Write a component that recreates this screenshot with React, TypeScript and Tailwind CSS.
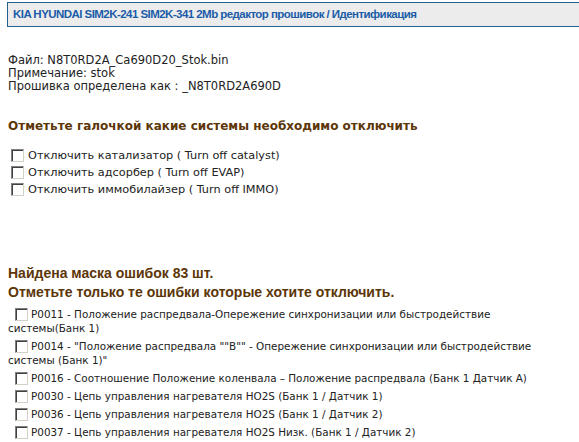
import React from "react";

const Box = ({ inline }: { inline?: boolean }) => (
  <span
    className={
      "inline-block w-[13px] h-[13px] shrink-0 border border-t-[#808080] border-l-[#808080] border-r-[#d4d0c8] border-b-[#d4d0c8] bg-white shadow-[inset_1px_1px_0_#404040] " +
      (inline ? "align-[-3px]" : "align-middle")
    }
  />
);

const systems = [
  "Отключить катализатор ( Turn off catalyst)",
  "Отключить адсорбер ( Turn off EVAP)",
  "Отключить иммобилайзер ( Turn off IMMO)",
];

const errors = [
  "P0011 - Положение распредвала-Опережение синхронизации или быстродействие системы(Банк 1)",
  'P0014 - "Положение распредвала ""B"" - Опережение синхронизации или быстродействие системы (Банк 1)"',
  "P0016 - Соотношение Положение коленвала – Положение распредвала (Банк 1 Датчик А)",
  "P0030 - Цепь управления нагревателя HO2S (Банк 1 / Датчик 1)",
  "P0036 - Цепь управления нагревателя HO2S (Банк 1 / Датчик 2)",
  "P0037 - Цепь управления нагревателя HO2S Низк. (Банк 1 / Датчик 2)",
];

export default function App() {
  return (
    <div className="w-[579px] h-[442px] overflow-hidden bg-white text-[#222] font-['DejaVu_Sans',Verdana,sans-serif] text-[11px]">
      <div className="mt-[2px] ml-[7px] h-[25px] border-l border-y border-[#25618f] bg-[#ececec] flex items-center pl-[5px]">
        <span className="font-['Liberation_Sans',Arial,sans-serif] font-bold text-[11.5px] text-[#1b5ca8] tracking-[-0.55px]">
          KIA HYUNDAI SIM2K-241 SIM2K-341 2Mb редактор прошивок / Идентификация
        </span>
      </div>

      <div className="mt-[27px] ml-[8px] leading-[13px] text-[11.5px]">
        <div>Файл: N8T0RD2A_Ca690D20_Stok.bin</div>
        <div>Примечание: stok</div>
        <div>Прошивка определена как : _N8T0RD2A690D</div>
      </div>

      <div className="mt-[25px] ml-[8px] font-bold text-[12px] text-[#5c3608] leading-[16px]">
        Отметьте галочкой какие системы необходимо отключить
      </div>

      <div className="mt-[15px] ml-[11px] flex flex-col gap-[4px] text-[11.3px]">
        {systems.map((s) => (
          <div key={s} className="flex items-center gap-[4px] h-[13px]">
            <Box />
            <span className="leading-[13px]">{s}</span>
          </div>
        ))}
      </div>

      <div className="mt-[68px] ml-[8px] font-['Liberation_Sans',Arial,sans-serif] font-bold text-[14px] text-[#5c3608] leading-[19px]">
        <div>Найдена маска ошибок 83 шт.</div>
        <div>Отметьте только те ошибки которые хотите отключить.</div>
      </div>

      <div className="mt-[5px] ml-[8px] w-[540px] flex flex-col gap-[4px] text-[10.4px]">
        {errors.map((e) => (
          <div key={e} className="leading-[14px]">
            <span className="inline-block w-[7px]" />
            <Box inline />
            <span className="ml-[3px]">{e}</span>
          </div>
        ))}
      </div>
    </div>
  );
}
